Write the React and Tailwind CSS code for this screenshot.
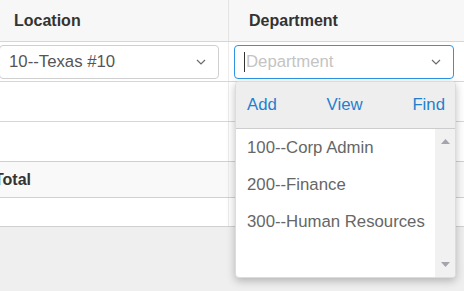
import React from 'react';

const Chevron = () => (
  <svg width="10" height="6" viewBox="0 0 10 6" className="shrink-0">
    <path d="M1 1l4 4 4-4" fill="none" stroke="#6b6b6b" strokeWidth="1.2" />
  </svg>
);

const Select = ({ value, placeholder, focused }) => (
  <div
    className={`flex h-[34px] w-[220px] items-center justify-between rounded-[4px] border bg-white pl-[9px] pr-[12px] ${
      focused ? 'border-[#2e94e6]' : 'border-[#cfcfcf]'
    }`}
  >
    <div className="flex items-center">
      {focused && <span className="mr-[1px] h-[20px] w-px bg-[#333]" />}
      <span className={`text-[16.75px] ${value ? 'text-[#555]' : 'text-[#c4c4c4]'}`}>{value || placeholder}</span>
    </div>
    <Chevron />
  </div>
);

const departments = ['100--Corp Admin', '200--Finance', '300--Human Resources'];

export default function App() {
  return (
    <div className="h-[291px] w-[464px] overflow-hidden bg-[#efefef] font-['Liberation_Sans',Arial,sans-serif]">
      <div className="relative -ml-[6px] w-[470px]">
        <div className="grid h-[42px] grid-cols-[235px_235px] border-b border-[#d6d6d6] bg-[#f7f7f7] text-[16px] font-bold text-[#333]">
          <div className="flex items-center border-r border-[#e4e4e4] pl-[20px]">Location</div>
          <div className="flex items-center pl-[20px]">Department</div>
        </div>

        <div className="grid h-[40px] grid-cols-[235px_235px] border-b border-[#d6d6d6] bg-white">
          <div className="flex items-center border-r border-[#ececec] pl-[5px]">
            <Select value="10--Texas #10" />
          </div>
          <div className="flex items-center pl-[5px]">
            <Select placeholder="Department" focused />
          </div>
        </div>

        <div className="grid h-[40px] grid-cols-[235px_235px] border-b border-[#d6d6d6] bg-white">
          <div className="border-r border-[#ececec]" />
          <div />
        </div>
        <div className="grid h-[40px] grid-cols-[235px_235px] border-b border-[#d0d0d0] bg-white">
          <div className="border-r border-[#ececec]" />
          <div />
        </div>
        <div className="grid h-[36px] grid-cols-[235px_235px] border-b border-[#d0d0d0] bg-[#f9f9f9]">
          <div className="flex items-center border-r border-[#ececec] text-[16px] font-bold text-[#333]">Total</div>
          <div />
        </div>
        <div className="grid h-[29px] grid-cols-[235px_235px] border-b border-[#d0d0d0] bg-white">
          <div className="border-r border-[#ececec]" />
          <div />
        </div>

        {/* department dropdown */}
        <div className="absolute left-[241px] top-[81px] flex h-[197px] w-[221px] flex-col overflow-hidden rounded-[4px] border border-[#dcdcdc] bg-white shadow-[0_3px_8px_rgba(0,0,0,0.25)]">
          <div className="flex h-[47px] shrink-0 items-center justify-between border-b border-[#cccccc] bg-[#eeeeee] pl-[11px] pr-[10px] text-[16.75px] text-[#1f80cf]">
            <span>Add</span>
            <span>View</span>
            <span>Find</span>
          </div>
          <div className="flex flex-1">
            <div className="flex-1">
              {departments.map((d) => (
                <div key={d} className="flex h-[37px] items-center pl-[11px] text-[16.75px] text-[#666]">
                  {d}
                </div>
              ))}
            </div>
            <div className="flex w-[20px] flex-col items-center justify-between bg-[#f1f1f1] pb-[10px] pt-[10px]">
              <svg width="9" height="5" viewBox="0 0 9 5">
                <path d="M0 5L4.5 0L9 5z" fill="#a6a2ae" />
              </svg>
              <svg width="9" height="5" viewBox="0 0 9 5">
                <path d="M0 0L4.5 5L9 0z" fill="#a6a2ae" />
              </svg>
            </div>
          </div>
        </div>
      </div>
    </div>
  );
}
